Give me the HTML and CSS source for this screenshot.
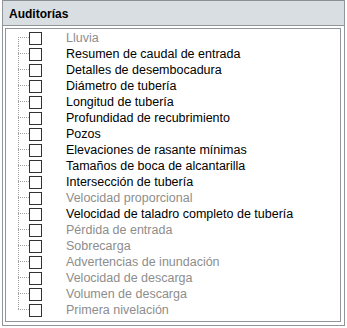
FILE: index.html
```html
<!DOCTYPE html>
<html lang="es">
<head>
    <meta charset="UTF-8">
    <title>Auditorías</title>
    <link rel="stylesheet" href="styles.css">
</head>
<body>
    <div class="frame">
        <div class="frame_header">Auditorías</div>
        <div class="tree_panel">
            <ul class="tree">
                <li class="tree_row first disabled"><span class="branch"></span><span class="check"></span><span class="label">Lluvia</span></li>
                <li class="tree_row"><span class="branch"></span><span class="check"></span><span class="label">Resumen de caudal de entrada</span></li>
                <li class="tree_row"><span class="branch"></span><span class="check"></span><span class="label">Detalles de desembocadura</span></li>
                <li class="tree_row"><span class="branch"></span><span class="check"></span><span class="label">Diámetro de tubería</span></li>
                <li class="tree_row"><span class="branch"></span><span class="check"></span><span class="label">Longitud de tubería</span></li>
                <li class="tree_row"><span class="branch"></span><span class="check"></span><span class="label">Profundidad de recubrimiento</span></li>
                <li class="tree_row"><span class="branch"></span><span class="check"></span><span class="label">Pozos</span></li>
                <li class="tree_row"><span class="branch"></span><span class="check"></span><span class="label">Elevaciones de rasante mínimas</span></li>
                <li class="tree_row"><span class="branch"></span><span class="check"></span><span class="label">Tamaños de boca de alcantarilla</span></li>
                <li class="tree_row"><span class="branch"></span><span class="check"></span><span class="label">Intersección de tubería</span></li>
                <li class="tree_row disabled"><span class="branch"></span><span class="check"></span><span class="label">Velocidad proporcional</span></li>
                <li class="tree_row"><span class="branch"></span><span class="check"></span><span class="label">Velocidad de taladro completo de tubería</span></li>
                <li class="tree_row disabled"><span class="branch"></span><span class="check"></span><span class="label">Pérdida de entrada</span></li>
                <li class="tree_row disabled"><span class="branch"></span><span class="check"></span><span class="label">Sobrecarga</span></li>
                <li class="tree_row disabled"><span class="branch"></span><span class="check"></span><span class="label">Advertencias de inundación</span></li>
                <li class="tree_row disabled"><span class="branch"></span><span class="check"></span><span class="label">Velocidad de descarga</span></li>
                <li class="tree_row disabled"><span class="branch"></span><span class="check"></span><span class="label">Volumen de descarga</span></li>
                <li class="tree_row last disabled"><span class="branch"></span><span class="check"></span><span class="label">Primera nivelación</span></li>
            </ul>
        </div>
    </div>
</body>
</html>
```

FILE: styles.css
```css
body {
    margin: 0;
    background: white;
    font-family: "Liberation Sans", Arial, sans-serif;
}
.frame {
    margin-left: 2px;
    width: 341px;
    height: 324px;
    border: 1px solid #8f959b;
    border-top-color: #8a9096;
    background: white;
}
.frame_header {
    height: 24px;
    padding-left: 6px;
    line-height: 26px;
    font-size: 12px;
    font-weight: bold;
    color: black;
    background: #d9dee2;
    border-bottom: 1px solid #8f959b;
}
.tree_panel {
    margin: 2px 3px 0 2px;
    height: 292px;
    border: 1px solid #8f959b;
}
.tree {
    list-style: none;
    margin: 0;
    padding: 1px 0 0 12px;
}
.tree_row {
    display: flex;
    align-items: center;
    height: 16px;
    font-size: 12.5px;
    color: black;
}
.tree_row.disabled {
    color: #8d8d8d;
}
.branch {
    align-self: stretch;
    width: 11px;
    background:
        repeating-linear-gradient(to bottom, #a0a0a0 0 1px, transparent 1px 2px) left top / 1px 100% no-repeat,
        repeating-linear-gradient(to right, #a0a0a0 0 1px, transparent 1px 2px) left 7px / 100% 1px no-repeat;
}
.first .branch {
    background:
        repeating-linear-gradient(to bottom, #a0a0a0 0 1px, transparent 1px 2px) left 7px / 1px 9px no-repeat,
        repeating-linear-gradient(to right, #a0a0a0 0 1px, transparent 1px 2px) left 7px / 100% 1px no-repeat;
}
.last .branch {
    background:
        repeating-linear-gradient(to bottom, #a0a0a0 0 1px, transparent 1px 2px) left top / 1px 8px no-repeat,
        repeating-linear-gradient(to right, #a0a0a0 0 1px, transparent 1px 2px) left 7px / 100% 1px no-repeat;
}
.check {
    width: 11px;
    height: 11px;
    border: 1px solid #333333;
    background: white;
}
.label {
    margin-left: 24px;
    white-space: nowrap;
}
```
